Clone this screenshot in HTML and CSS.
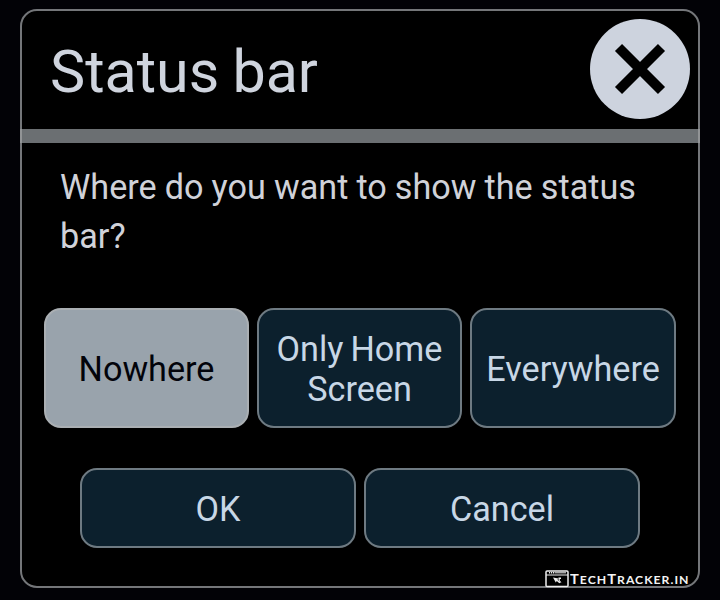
FILE: index.html
```html
<!DOCTYPE html>
<html lang="en">
<head>
<meta charset="utf-8">
<title>Status bar</title>
<link rel="stylesheet" href="styles.css">
</head>
<body>
<main class="dialog">
  <header class="header">
    <h1 class="title">Status bar</h1>
    <button class="close" aria-label="Close">
      <svg width="100" height="100" viewBox="0 0 100 100"><path d="M28.500 28.500L71.500 71.500M71.500 28.500L28.500 71.500"/></svg>
    </button>
  </header>
  <div class="divider"></div>
  <p class="message">Where do you want to show the status bar?</p>
  <div class="options">
    <button class="btn selected">Nowhere</button>
    <button class="btn">Only Home Screen</button>
    <button class="btn">Everywhere</button>
  </div>
  <div class="actions">
    <button class="btn">OK</button>
    <button class="btn">Cancel</button>
  </div>
  <div class="watermark">
    <svg class="mark" width="24" height="18" viewBox="0 0 24 18">
      <rect class="frame" x="1" y="1" width="22" height="15.500" rx="1"/>
      <path class="line" d="M1 5H23M9.500 2.800H21"/>
      <path class="dots" d="M4 2.800H9"/>
      <path class="cursor" d="M8 7.500L13.500 8.500L12.500 9.800L15.500 12.500L14.300 13.300L11.800 11L10.800 12.500Z"/>
      <path class="cursor" d="M13.500 7.500H16V9H14.800V10.500L16.500 12.500H15L13.500 10.500Z"/>
    </svg>
    <span class="brand"><span class="cap">T</span>ECH<span class="cap">T</span>RACKER.IN</span>
  </div>
</main>
</body>
</html>
```
FILE: styles.css
```css
* { box-sizing: border-box; }
body {
  margin: 0;
  height: 600px;
  padding: 9px 20px 12px;
  overflow: hidden;
  background: #020206;
  font-family: Roboto, sans-serif;
  color: #d0d2d9;
}
.dialog {
  position: relative;
  height: 579px;
  border: 2px solid #747679;
  border-radius: 17px;
  background: #000;
}
.header {
  display: flex;
  justify-content: space-between;
  align-items: center;
  height: 118px;
  padding: 0 8px 2px 28px;
}
.title {
  margin: 6px 0 0;
  font-size: 59.200px;
  font-weight: 400;
  line-height: 70px;
  word-spacing: -1.500px;
  color: #cfd4de;
}
.close {
  width: 100px;
  height: 100px;
  padding: 0;
  border: 0;
  border-radius: 50%;
  background: #cdd3de;
}
.close svg { display: block; }
.close path { stroke: #000; stroke-width: 10; fill: none; }
.divider {
  height: 14px;
  margin: 0 -2px;
  background: #6b6f72;
  border: solid #929496;
  border-width: 0 2px;
}
.message {
  height: 98px;
  margin: 20px 38px 0;
  font-size: 34.200px;
  line-height: 49px;
  word-spacing: -0.400px;
}
.options {
  display: grid;
  grid-template-columns: 205px 205px 206px;
  gap: 8px;
  height: 120px;
  margin: 47px 22px 0;
}
.actions {
  display: grid;
  grid-template-columns: 1fr 1fr;
  gap: 8px;
  height: 80px;
  margin: 40px 58px 0;
}
.btn {
  padding: 2px 8px 0;
  border: 2px solid #6e7a82;
  border-radius: 17px;
  background: #0c202d;
  color: #c8d7e6;
  font: 400 34.200px/40px Roboto, sans-serif;
  word-spacing: -1.500px;
}
.selected {
  background: #99a3ac;
  border-color: #aaafb3;
  color: #02030a;
}
.watermark {
  position: absolute;
  left: 523px;
  top: 558px;
  display: flex;
  align-items: center;
  color: #f4f4f4;
}
.mark { fill: none; stroke: #eee; }
.frame { fill: #000; stroke-width: 1.500; }
.line { stroke-width: 1; }
.dots { stroke-width: 1.500; stroke-dasharray: 1.200 0.800; }
.cursor { fill: #eee; stroke: none; }
.brand {
  margin: 2px 0 0 1px;
  font: 700 10.800px/16px Lato, sans-serif;
  letter-spacing: 0.900px;
  transform: scaleX(1.130);
  transform-origin: left;
}
.cap { font-size: 13px; }
```
